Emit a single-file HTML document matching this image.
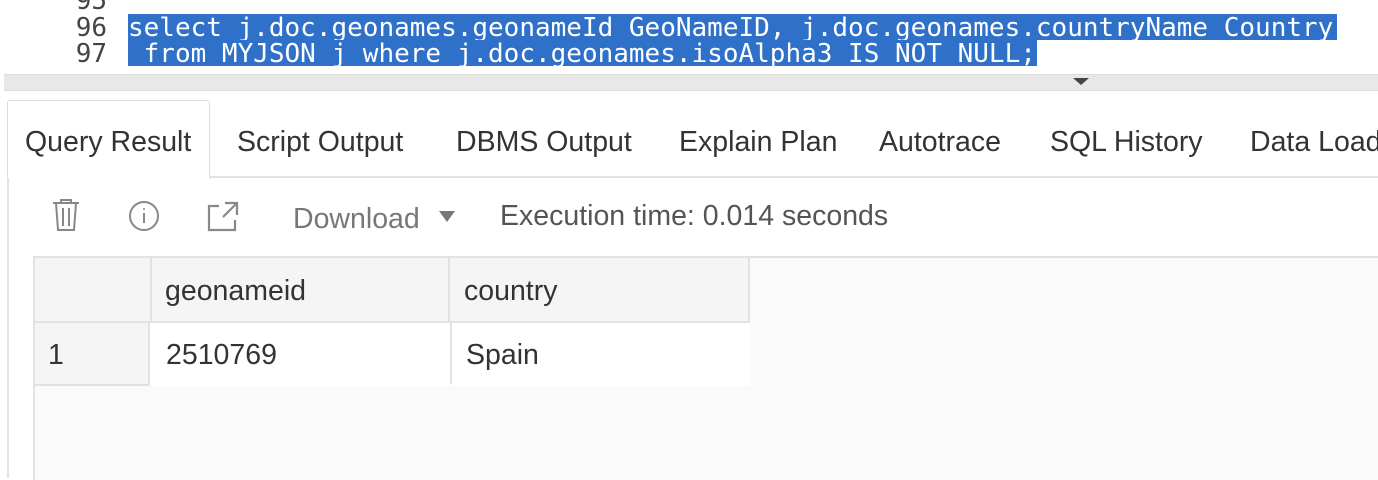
<!DOCTYPE html>
<html><head><meta charset="utf-8"><style>
body{margin:0;width:1378px;height:478px;overflow:hidden;background:#fff;position:relative;font-family:"Liberation Sans",sans-serif;color:#333}
.a{position:absolute;white-space:pre}
.code{font-family:"DejaVu Sans Mono","Liberation Mono",monospace;font-size:26px;line-height:26px}
.ln{color:#444;text-align:right;width:60px;left:47px}
.sel{background:#2f70c9;color:#fff}
.tab{font-size:28.5px;top:126px;color:#333}
.t{font-size:28.5px}
</style></head><body>
<div class="a code ln" style="top:-12px">95</div>
<div class="a code ln" style="top:15px">96</div>
<div class="a code ln" style="top:41px">97</div>
<div class="a code sel" style="left:128px;top:14px;width:1209px;height:26px;padding-top:1px;box-sizing:border-box">select j.doc.geonames.geonameId GeoNameID, j.doc.geonames.countryName Country</div>
<div class="a code sel" style="left:128px;top:40px;width:909px;height:26px;overflow:hidden;padding-top:1px;box-sizing:border-box"> from MYJSON j where j.doc.geonames.isoAlpha3 IS NOT NULL;</div>
<div class="a" style="left:4px;top:74px;width:1374px;height:15px;background:#e8e8e8;border-top:1px solid #ddd;border-bottom:1px solid #ddd"></div>
<div class="a" style="left:1073px;top:78px;width:0;height:0;border-left:8px solid transparent;border-right:8px solid transparent;border-top:7px solid #444"></div>
<div class="a" style="left:7px;top:100px;width:201px;height:78px;border:1px solid #ddd;border-bottom:none;border-radius:3px 3px 0 0;background:#fff"></div>
<div class="a" style="left:209px;top:176px;width:1169px;height:2px;background:#e2e2e2"></div>
<div class="a" style="left:7px;top:178px;width:2px;height:300px;background:#e2e2e2"></div>
<div class="a tab" style="left:25px">Query Result</div>
<div class="a tab" style="left:237px">Script Output</div>
<div class="a tab" style="left:456px">DBMS Output</div>
<div class="a tab" style="left:679px">Explain Plan</div>
<div class="a tab" style="left:879px">Autotrace</div>
<div class="a tab" style="left:1050px">SQL History</div>
<div class="a tab" style="left:1250px">Data Loading</div>
<svg class="a" style="left:50px;top:198px" width="32" height="36" viewBox="0 0 32 36" fill="none" stroke="#888" stroke-width="2">
<path d="M3 5h26M11 5V2h10v3M6 5l2 27h16l2-27M13 10v18M19 10v18"/></svg>
<svg class="a" style="left:128px;top:200px" width="32" height="32" viewBox="0 0 32 32" fill="none" stroke="#888" stroke-width="2">
<circle cx="16" cy="16" r="14"/><path d="M16 13v10"/><circle cx="16" cy="9" r="1" fill="#888" stroke="none"/></svg>
<svg class="a" style="left:206px;top:200px" width="34" height="34" viewBox="0 0 34 34" fill="none" stroke="#888" stroke-width="2.2">
<path d="M13 6H3v24h26V20M19 3h12v12M31 3L17 17"/></svg>
<div class="a t" style="left:293px;top:203px;color:#777">Download</div>
<div class="a" style="left:439px;top:211px;width:0;height:0;border-left:8px solid transparent;border-right:8px solid transparent;border-top:11px solid #777"></div>
<div class="a t" style="left:500px;top:200px;color:#555">Execution time: 0.014 seconds</div>
<div class="a" style="left:33px;top:256px;width:1345px;height:222px;background:#fafafa;border-top:2px solid #e2e2e2;border-left:2px solid #e2e2e2"></div>
<div class="a" style="left:35px;top:258px;width:115px;height:63px;background:#f5f5f5;border-right:2px solid #e2e2e2;border-bottom:2px solid #e2e2e2"></div>
<div class="a" style="left:152px;top:258px;width:296px;height:63px;background:#f5f5f5;border-right:2px solid #e2e2e2;border-bottom:2px solid #e2e2e2"></div>
<div class="a" style="left:450px;top:258px;width:298px;height:63px;background:#f5f5f5;border-right:2px solid #e2e2e2;border-bottom:2px solid #e2e2e2"></div>
<div class="a" style="left:35px;top:323px;width:113px;height:61px;background:#f5f5f5;border-right:2px solid #e2e2e2;border-bottom:2px solid #e2e2e2"></div>
<div class="a" style="left:150px;top:323px;width:300px;height:63px;background:#fff"></div>
<div class="a" style="left:450px;top:323px;width:2px;height:61px;background:#e2e2e2"></div>
<div class="a" style="left:452px;top:323px;width:298px;height:63px;background:#fff"></div>
<div class="a t" style="left:165px;top:275px">geonameid</div>
<div class="a t" style="left:464px;top:275px">country</div>
<div class="a t" style="left:48px;top:339px">1</div>
<div class="a t" style="left:166px;top:339px">2510769</div>
<div class="a t" style="left:466px;top:339px">Spain</div>
</body></html>
